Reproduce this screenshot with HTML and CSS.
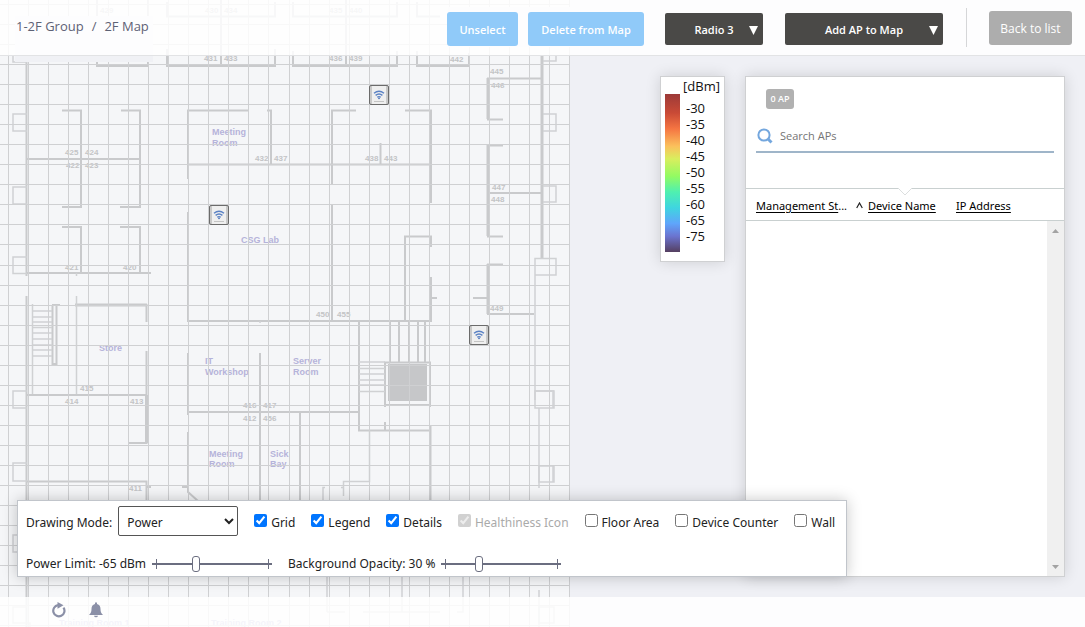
FILE: index.html
```html
<!DOCTYPE html>
<html lang="en">
<head>
<meta charset="utf-8">
<title>2F Map</title>
<link rel="stylesheet" href="styles.css">
</head>
<body>
<div class="app">
  <svg class="floor" width="570" role="img" aria-label="2F floor plan">
    <defs>
      <pattern id="cols" width="20" height="20" patternUnits="userSpaceOnUse"><rect x="8" width="1" height="20"/></pattern>
      <pattern id="cols-b" width="20" height="20" patternUnits="userSpaceOnUse"><rect x="9" width="1" height="20"/></pattern>
      <pattern id="rows" width="20" height="20" patternUnits="userSpaceOnUse"><rect y="4" width="20" height="1"/></pattern>
      <pattern id="rows-b" width="20" height="20" patternUnits="userSpaceOnUse"><rect y="5" width="20" height="1"/></pattern>
      <g id="ap">
        <rect x=".5" y=".5" width="19" height="19" rx="1.5" fill="#c9c9c9" stroke="#6b6b6b"/>
        <rect x="3" y="1" width="14" height="18" fill="#efefef"/>
        <path d="M5 8.300q5-4 10 0M6.600 10.400q3.400-2.700 6.800 0M8.200 12.300q1.800-1.300 3.600 0" fill="none" stroke="#5b82c4" stroke-width="1.400"/>
        <circle cx="10" cy="13.300" r=".9" fill="#4a72b8"/>
        <path d="M5.500 16.500h9" stroke="#999" stroke-dasharray="1 1"/>
      </g>
    </defs>
    <rect width="570" height="100%" class="paper"/>
    <g class="walls">
      <path d="M97 0V16M148 0V16M97 60V66H148V60M167 2V16.500H275V2M221 0V64M167 49V66H275V49M293 2V16.500H397V2M346 0V64M293 51V66H397V51M417 2V16.500H440M417 51V66H469V53"/>
      <path d="M62 110.500H81V207H62M121 110.500H140V207H120M26 159H140M62 227H81V273M120 227H140V273M26 273H151"/>
      <path d="M188 179V110.500H248M267 110.500H271V164M188 164.500H431M332 185V110.500H356M405 110.500H431V203M380.500 143V164M188 212V321H431V277M431 298H437M332 205V321M405 321V236.500H431V247"/>
      <path d="M543 78.500H488V119.500H503M503 145.500H488V236.500H503M488 193H543M503 264.500H488V314H534M473 298H488"/>
      <path d="M76 305H146.500V322M146.500 351V443H129M26 395H146M26 481.500H146.500V500M147 487H151"/>
      <path d="M188 353V415M188 412H359M260 353V500M188 432V492L198 501M182 487H188M300 412V500M359 321V430.500H431M430.500 426V500M385 422V430"/>
      <path d="M385 407V362.500H430V407M385 405H430M390 321V362M399 321V362M409 321V362M418 321V362M425 321V362"/>
      <path d="M26.500 56V276M26.500 296V640M52 305H60M52.500 305V364H56.500V305"/>
    </g>
    <g class="walls heavy">
      <path d="M542 56V258M75 305H147M488 78V119M488 145V236M488 264V314M146.500 395V443"/>
    </g>
    <g class="walls thin">
      <path d="M369.500 430V481.500H343.500V496M323 500V487.500H325M341 487.500H343M32.500 304V394M76.500 296V394M76.500 273V276M260 321V323M535 314V400M539 408V488M539 590V640"/>
      <path d="M13 56V62H27M27 114H13V131H27M27 187H13V204H27M27 257H13V273.500H27M27 391H13V408H27M27 463H13V481H27M27 535H13V552H27M27 607H13V623H30V640M543 61H556V56M543 114H556V131H543M543 186H556V202H543M535 258.500H556V275H535ZM535 258V314M535 391H554V408H535ZM539 466H554V482H539ZM539 607H554V623H539Z"/>
      <path d="M553 392V408M553 466V482M535 391H554"/>
      <path d="M32 311H52M32 317H52M32 322H52M32 327.500H52M32 333H52M32 339H52M32 345H52M32 350H52M32 356H52M359 362H385M359 368.500H385M359 374H385M359 380H385M359 385H385M359 391.500H385"/>
      <path d="M327 577V612M402 577V612H363M463 577V612H457M345 612H327M363 612H440"/>
    </g>
    <rect x="388" y="364" width="39" height="37" class="shaft"/>
    <g class="nums">
      <text x="100" y="13">429</text><text x="205" y="13">430</text><text x="224" y="13">434</text><text x="329" y="13">435</text><text x="349" y="13">440</text>
      <text x="204" y="61">431</text><text x="224" y="61">433</text><text x="329" y="61">436</text><text x="349" y="61">439</text><text x="450" y="62">442</text>
      <text x="490" y="74">445</text><text x="491" y="88">446</text><text x="65" y="155">425</text><text x="85" y="155">424</text><text x="66" y="168">422</text><text x="85" y="168">423</text>
      <text x="255" y="161">432</text><text x="274" y="161">437</text><text x="365" y="161">438</text><text x="384" y="161">443</text><text x="492" y="190">447</text><text x="491" y="202">448</text>
      <text x="65" y="270">421</text><text x="123" y="270">420</text><text x="316" y="317">450</text><text x="337" y="317">455</text><text x="490" y="311">449</text>
      <text x="80" y="391">415</text><text x="65" y="404">414</text><text x="130" y="404">413</text><text x="243" y="408">416</text><text x="263" y="408">417</text><text x="243" y="421">412</text><text x="263" y="421">456</text><text x="129" y="491">411</text>
    </g>
    <g class="rooms">
      <text x="212" y="135">Meeting</text><text x="212" y="146">Room</text><text x="241" y="243">CSG Lab</text><text x="99" y="351">Store</text>
      <text x="205" y="364">IT</text><text x="205" y="375">Workshop</text><text x="293" y="364">Server</text><text x="293" y="375">Room</text>
      <text x="209" y="457">Meeting</text><text x="209" y="467">Room</text><text x="270" y="457">Sick</text><text x="270" y="467">Bay</text>
      <text x="59" y="626">Training Room 1</text><text x="211" y="626">Training Room 2</text>
    </g>
    <g class="grid">
      <rect width="280" height="100%" fill="url(#cols)"/><rect x="280" width="290" height="100%" fill="url(#cols-b)"/>
      <rect width="570" height="260" fill="url(#rows)"/><rect y="260" width="570" height="100%" fill="url(#rows-b)"/>
    </g>
    <rect x="15" y="16" width="138" height="46" class="mask"/>
    <rect x="448" y="7" width="122" height="40" class="mask"/>
    <use href="#ap" x="369" y="85"/><use href="#ap" x="209" y="205"/><use href="#ap" x="469" y="325"/>
  </svg>

  <header class="topbar">
    <nav class="crumbs" aria-label="Breadcrumb"><a href="#group">1-2F Group</a><span>/</span><span>2F Map</span></nav>
    <div class="actions">
      <button class="btn blue" type="button">Unselect</button>
      <button class="btn blue" type="button">Delete from Map</button>
      <button class="btn dark radio" type="button"><span>Radio 3</span><svg width="9" height="9"><path d="M0 0h9L4.500 9z" fill="#fff"/></svg></button>
      <button class="btn dark add" type="button"><span>Add AP to Map</span><svg width="9" height="9"><path d="M0 0h9L4.500 9z" fill="#fff"/></svg></button>
      <span class="rule"></span>
      <button class="btn grey" type="button">Back to list</button>
    </div>
  </header>

  <main class="stage">
    <section class="legend" aria-label="Signal legend">
      <div class="unit">[dBm]</div>
      <div class="scale">
        <div class="ramp"></div>
        <ul><li>-30</li><li>-35</li><li>-40</li><li>-45</li><li>-50</li><li>-55</li><li>-60</li><li>-65</li><li>-75</li></ul>
      </div>
    </section>

    <aside class="side">
      <div class="side-head">
        <span class="count">0 AP</span>
        <label class="search">
          <svg width="16" height="16" viewBox="0 0 16 16" aria-hidden="true"><circle cx="7" cy="7" r="5.600" fill="none" stroke="#74a7de" stroke-width="2"/><path d="M10.800 10.800L14.500 14.500" stroke="#74a7de" stroke-width="3"/></svg>
          <input type="text" placeholder="Search APs" aria-label="Search APs">
        </label>
      </div>
      <svg class="notch" width="16" height="9" aria-hidden="true"><path d="M1 0L8 7L15 0" fill="#fff" stroke="#dcdfdf"/></svg>
      <table class="aps">
        <thead><tr>
          <th class="c-state"><div><a href="#state">Management St</a>...<svg width="7" height="7" aria-hidden="true"><path d="M.7 6L3.500 1L6.300 6" fill="none" stroke="#222" stroke-width="1.200"/></svg></div></th>
          <th class="c-name"><a href="#name">Device Name</a></th>
          <th><a href="#ip">IP Address</a></th>
        </tr></thead>
      </table>
      <div class="list"><div class="bar">
        <svg width="9" height="6" aria-hidden="true"><path d="M1 5L4.500 1L8 5z" fill="#a3a3a3"/></svg>
        <svg width="9" height="6" aria-hidden="true"><path d="M1 0L4.500 4L8 0z" fill="#a3a3a3"/></svg>
      </div></div>
    </aside>

    <form class="controls">
      <div class="line">
        <label for="mode">Drawing Mode:</label>
        <select id="mode"><option>Power</option></select>
        <label class="tick"><input type="checkbox" checked>Grid</label>
        <label class="tick"><input type="checkbox" checked>Legend</label>
        <label class="tick"><input type="checkbox" checked>Details</label>
        <label class="tick off"><input type="checkbox" checked disabled>Healthiness Icon</label>
        <label class="tick"><input type="checkbox">Floor Area</label>
        <label class="tick"><input type="checkbox">Device Counter</label>
        <label class="tick"><input type="checkbox">Wall</label>
      </div>
      <div class="line sliders">
        <label class="slide">Power Limit: -65 dBm<input type="range" min="-80" max="-38" value="-65"></label>
        <label class="slide">Background Opacity: 30 %<input type="range" min="0" max="100" value="30"></label>
      </div>
    </form>
  </main>

  <footer class="status">
    <button type="button" aria-label="Refresh"><svg width="16" height="16" viewBox="0 0 16 16"><path d="M7 3.200A5.600 5.600 0 1 0 12.500 5.600" fill="none" stroke="#8b90a7" stroke-width="2.200"/><path d="M6.500 0L12.500 3.300L6.500 6.800z" fill="#8b90a7"/></svg></button>
    <button type="button" aria-label="Alerts"><svg width="14" height="16" viewBox="0 0 14 16"><path d="M6 2V.5h2V2c2.500.6 3.500 2.500 3.500 5 0 3 .8 4.500 2.500 6H0c1.700-1.500 2.500-3 2.500-6 0-2.500 1-4.400 3.500-5zM5 13.800h4q-.3 1.500-2 1.500t-2-1.500z" fill="#8b90a7"/></svg></button>
  </footer>
</div>
</body>
</html>
```
FILE: styles.css
```css
* { box-sizing: border-box; }
body {
  margin: 0;
  font: 13px/20px "Open Sans", "Noto Sans", sans-serif;
  color: #222;
  background: #eff0f5;
}
button, input, select { font: inherit; color: inherit; }
a { color: inherit; text-decoration: none; }
.app {
  display: grid;
  grid-template-rows: 56px minmax(0, 1fr) 30px;
  grid-template-columns: 100%;
  height: 100vh;
  min-height: 500px;
  overflow: hidden;
}
.floor { grid-area: 1 / 1 / 4 / 2; height: 100%; min-height: 0; }
.topbar { grid-area: 1 / 1; }
.stage { grid-area: 2 / 1; }
.status { grid-area: 3 / 1; }

.paper { fill: #f5f6f8; }
.walls { fill: none; stroke: #c9cacc; stroke-width: 2; }
.heavy { stroke-width: 3; }
.thin { stroke: #d0d1d3; stroke-width: 1.5; }
.shaft { fill: #c6c7c9; }
.nums { font: bold 8px "Liberation Sans", sans-serif; fill: #c3c4c6; }
.rooms { font: bold 9px "Liberation Sans", sans-serif; fill: #b5b3da; }
.grid, pattern { fill: #cfd0d2; }
.mask { fill: #f0f1f5; }

.topbar {
  z-index: 1;
  display: flex;
  align-items: flex-start;
  justify-content: space-between;
  padding: 0 13px 0 16px;
  background: rgba(255, 255, 255, .85);
  border-bottom: 1px solid #e2e3e5;
}
.crumbs { display: flex; gap: 8px; padding-top: 16px; color: #5d6275; }
.actions { display: flex; align-items: flex-start; padding-top: 8px; }
.btn {
  border: 0;
  border-radius: 3px;
  padding: 0;
  height: 34px;
  color: #fff;
  font-size: 11px;
  font-weight: 600;
}
.blue { width: 71px; margin: 4px 10px 0 0; padding-top: 2px; background: #90caf9; }
.blue + .blue { width: 116px; margin-right: 21px; }
.dark {
  display: flex;
  align-items: center;
  height: 32px;
  margin-top: 5px;
  padding: 2px 5px 0 14px;
  border-radius: 2px;
  background: #4a4947;
}
.dark span { flex: 1; }
.radio { width: 98px; margin-right: 22px; }
.add { width: 158px; }
.rule { width: 1px; height: 39px; margin: 0 22px 0 23px; background: #d5d6d8; }
.grey { width: 83px; margin-top: 3px; padding-top: 2px; background: #adadad; font-size: 12px; font-weight: 400; }

.stage {
  position: relative;
  display: flex;
  justify-content: flex-end;
  align-items: flex-start;
  gap: 20px;
  padding: 20px 20px 20px 0;
}
.legend, .side {
  background: #fff;
  border: 1px solid #cfd0d2;
  box-shadow: 0 0 14px rgba(0, 0, 0, .14);
}
.legend { width: 65px; padding: 0 4px 9px; color: #111; line-height: 16px; }
.unit { padding-top: 1px; text-align: right; }
.scale { display: flex; gap: 6px; }
.ramp {
  width: 15px;
  height: 158px;
  background: linear-gradient(#9c3a38, #c94a36 12%, #f57542 22%, #fbc05c 33%, #d9ee5e 41%, #93fb62 52%, #4ff0b0 62%, #3fd5e0 72%, #5fa5fb 82%, #6b74d0 90%, #553f60);
}
.scale ul { margin: 0; padding: 6px 0 0; list-style: none; }

.side {
  position: relative;
  display: flex;
  flex-direction: column;
  align-self: stretch;
  width: 320px;
}
.side-head { height: 112px; padding: 12px 10px 0; border-bottom: 1px solid #c9d0d0; }
.count {
  display: block;
  width: 28px;
  height: 20px;
  margin: 0 0 17px 10px;
  border-radius: 3px;
  background: #b1b1b1;
  color: #fff;
  font-size: 9px;
  font-weight: 600;
  text-align: center;
}
.search { display: flex; align-items: center; gap: 7px; height: 27px; padding: 0 0 6px 1px; border-bottom: 2px solid #9fb5c9; }
.search input { flex: 1; min-width: 0; padding: 0; border: 0; outline: 0; background: none; font-size: 11px; }
.search input::placeholder { color: #757575; opacity: 1; }
.notch { position: absolute; left: 151px; top: 111px; }
.aps { width: 100%; table-layout: fixed; border-collapse: separate; border-spacing: 0; font: 11px/20px "Noto Sans", sans-serif; }
.aps th { height: 32px; padding: 2px 0 0; border-bottom: 1px solid #c9d0d0; font-weight: 400; text-align: left; color: #000; }
.aps a { text-decoration: underline; text-underline-offset: 2px; }
.aps .c-state { width: 122px; padding-left: 10px; }
.c-state div { display: flex; align-items: center; white-space: nowrap; }
.c-state svg { margin: 0 5px 0 auto; }
.c-name { width: 88px; }
.list { flex: 1; display: flex; justify-content: flex-end; }
.bar { display: flex; flex-direction: column; justify-content: space-between; align-items: center; width: 17px; padding: 7px 0 5px; background: #f0f0f0; }

.controls {
  position: absolute;
  left: 17px;
  bottom: 20px;
  width: 830px;
  padding: 5px 8px 4px;
  background: #fff;
  border: 1px solid #c1c5cb;
  box-shadow: 0 0 14px rgba(0, 0, 0, .22);
  font: 12px/20px "Noto Sans", sans-serif;
}
.line { display: flex; align-items: center; height: 30px; white-space: nowrap; }
.line label { padding-top: 3px; }
.line select { flex: none; width: 120px; height: 30px; margin: 0 16px 0 6px; padding: 2px 4px 0; border: 1px solid #555; border-radius: 2px; background: #fff; }
.tick { display: flex; align-items: center; gap: 4px; margin-right: 16px; }
.tick input { width: 13px; height: 13px; margin: 0 0 4px; }
.off { color: #aaa; }
.sliders { height: 36px; padding-top: 16px; gap: 16px; }
.slide { display: flex; align-items: center; gap: 6px; }
.slide input {
  appearance: none;
  width: 120px;
  height: 16px;
  margin: 0;
  background:
    linear-gradient(#6b6e80, #6b6e80) center / 100% 2px,
    linear-gradient(#6b6e80, #6b6e80) 4px 50% / 1px 10px,
    linear-gradient(#6b6e80, #6b6e80) 116px 50% / 1px 10px;
  background-repeat: no-repeat;
}
.slide input::-webkit-slider-thumb {
  appearance: none;
  width: 8px;
  height: 16px;
  border: 1px solid #6b6e80;
  border-radius: 3px;
  background: #fff;
}

.status {
  z-index: 1;
  display: flex;
  align-items: flex-start;
  gap: 22px;
  padding: 5px 0 0 51px;
  background: rgba(255, 255, 255, .85);
}
.status button { display: flex; padding: 0; border: 0; background: none; }
```
